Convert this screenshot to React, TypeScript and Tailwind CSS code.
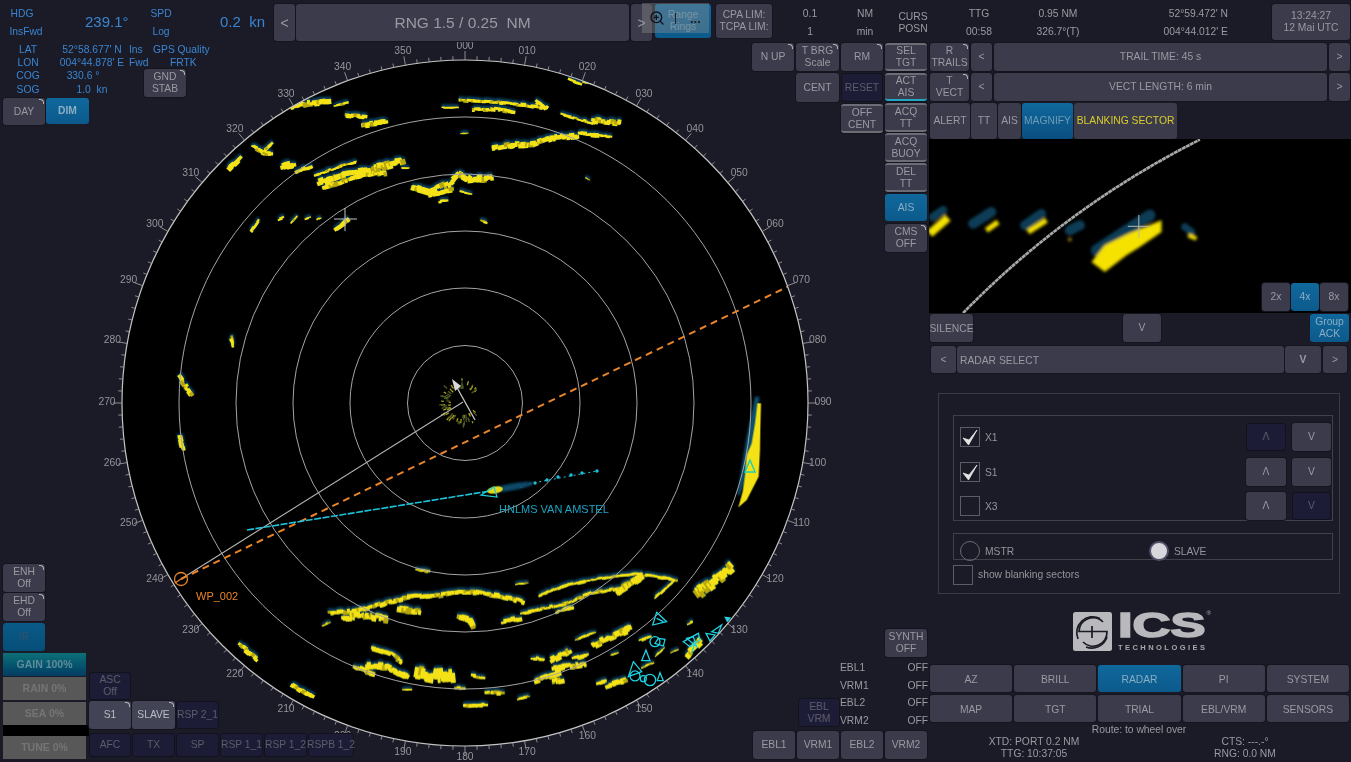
import React from "react";
import { ZoomIn } from "lucide-react";

const CX = 465;
const CY = 403;
const R = 343;

type Echo = [string, number];

// top echoes, coordinates taken from a 3x crop at (230,85)
const topEchoes: Echo[] = [
  ["180,68 230,55 300,48", 12], ["320,62 350,55", 6], ["350,90 405,95", 9], ["400,118 470,113", 12],
  ["640,68 685,68", 4], ["690,47 790,52 880,60 950,70", 7], ["920,48 950,70", 10], ["730,75 790,72 850,80", 8],
  ["1000,90 1090,115", 6], ["1090,105 1170,115", 12], ["790,190 850,180 910,178 930,170 960,160 1040,152", 12],
  ["1050,145 1140,155", 8], ["70,185 100,200 125,178", 8], ["100,205 125,205", 10], ["0,250 30,218", 12],
  ["155,245 195,235", 14], ["200,262 240,245", 8], ["270,295 340,270 420,255 520,225", 16],
  ["260,270 340,240 380,230", 6], ["285,305 400,270 470,265", 10], ["520,250 535,250", 4],
  ["550,305 600,320 660,295 690,268 720,285 790,278", 14], ["600,330 670,315", 10], ["695,320 720,325", 5],
  ["630,350 650,348", 6], ["65,438 85,408", 6], ["150,402 160,398", 5], ["185,410 200,393", 5],
  ["230,400 240,397", 5], ["265,403 275,397", 5], ["320,430 355,405", 12], ["755,408 770,412", 5],
  ["1070,280 1080,285", 4], ["700,145 712,145", 3],
];

// bottom echoes, 3x crop at (310,560)
const bottomEchoes: Echo[] = [
  ["60,160 110,155 170,145 230,128 260,120 300,110 380,108 440,98 500,98 570,108 640,125", 10],
  ["100,175 170,165 230,178", 14], ["640,160 700,145 770,130 840,100 930,85 990,45", 7],
  ["690,105 770,75 870,55 990,40", 6], ["740,155 790,140", 8], ["580,185 630,175", 10],
  ["1040,110 1090,65", 6], ["1005,45 1100,60", 8], ["1160,100 1230,50 1270,15", 22],
  ["920,95 960,70 990,50", 16], ["270,145 335,155", 14], ["445,170 480,180 490,205", 14],
  ["40,195 60,188", 5], ["325,30 355,35", 6], ["625,72 650,68", 4], ["190,265 240,280 275,305", 10],
  ["135,320 170,335 190,340", 12], ["170,318 230,320 290,350", 14], ["320,340 380,350 430,345", 26],
  ["490,348 520,352", 7], ["440,385 460,385", 8], ["285,388 300,388", 5], ["530,398 580,398", 9],
  ["630,415 655,410", 5], ["465,435 530,435", 10], ["670,295 705,297", 8], ["725,300 780,270", 14],
  ["730,325 830,310", 14], ["680,360 750,340", 12], ["730,365 755,360", 12], ["795,295 830,285", 8],
  ["800,240 850,218", 5], ["850,255 960,205", 14], ["995,240 1020,230", 6], ["865,370 885,365", 8],
  ["895,378 950,360", 12], ["1000,320 1030,308", 4], ["1130,285 1170,240", 16], ["1090,275 1105,268", 4],
  ["1040,285 1060,265", 4], ["905,285 925,278", 4], ["1140,190 1150,185", 6],
];

// the rest is in page coordinates x3 so it can share the same scale
const looseEchoes: Echo[] = [
  ["693,1014 699,1038", 9], ["540,1134 576,1185", 10], ["540,1311 549,1350", 11], ["720,1935 774,1980", 10],
  ["879,2055 936,2091", 10], ["1710,240 1740,252", 6], ["1755,243 1791,255", 9], ["774,450 798,462", 7],
];

const rnd = (n: number) => {
  const v = Math.sin(n * 12.9898) * 43758.5453;
  return v - Math.floor(v);
};

// chop an echo line into short returns so it reads as radar video, not as a drawn stroke
const streaks = (list: Echo[]) => {
  const out: { x1: number; y1: number; x2: number; y2: number; w: number; h: number }[] = [];
  let n = 1;
  list.forEach(([p, w]) => {
    const pts = p.split(" ").map((s) => s.split(",").map(Number));
    for (let i = 0; i < pts.length - 1; i++) {
      const [ax, ay] = pts[i];
      const [bx, by] = pts[i + 1];
      const dist = Math.hypot(bx - ax, by - ay);
      const ux = (bx - ax) / dist;
      const uy = (by - ay) / dist;
      for (let s = 0; s < dist; s += 6) {
        n += 1;
        const off = (rnd(n) - 0.5) * w * 0.8;
        const len = 8 + rnd(n + 0.5) * 12;
        const x = ax + ux * s - uy * off;
        const y = ay + uy * s + ux * off;
        out.push({
          x1: x - (ux * len) / 2,
          y1: y - (uy * len) / 2,
          x2: x + (ux * len) / 2,
          y2: y + (uy * len) / 2,
          w: Math.max(3, w * (0.75 + rnd(n + 0.25) * 0.55)),
          h: rnd(n + 0.75),
        });
      }
    }
  });
  return out;
};

const allStreaks = [
  { tx: 230, ty: 85, items: streaks(topEchoes) },
  { tx: 310, ty: 560, items: streaks(bottomEchoes) },
  { tx: 0, ty: 0, items: streaks(looseEchoes) },
];

const ticks = Array.from({ length: 180 }, (_, i) => i * 2);
const labels = Array.from({ length: 36 }, (_, i) => i * 10);

// sea clutter round own ship, with a gap on the right
const clutter = Array.from({ length: 70 }, (_, i) => {
  const a = ((40 + rnd(i + 3) * 280) * Math.PI) / 180;
  const r = 12 + rnd(i + 40) * 10;
  return { a, r, len: 2 + rnd(i + 90) * 3, hot: rnd(i + 70) > 0.55 };
});

const polar = (deg: number, rx: number, ry: number, cy: number) => {
  const a = ((deg - 90) * Math.PI) / 180;
  return [CX + rx * Math.cos(a), cy + ry * Math.sin(a)];
};

const Radar = () => (
  <svg className="absolute inset-0" width={1351} height={762} viewBox="0 0 1351 762">
    <defs>
      <clipPath id="disc">
        <circle cx={CX} cy={CY} r={R} />
      </clipPath>
      <filter id="soft">
        <feGaussianBlur stdDeviation="0.5" />
      </filter>
      <filter id="softer">
        <feGaussianBlur stdDeviation="1" />
      </filter>
    </defs>
    <circle cx={CX} cy={CY} r={R} fill="#000" />
    <g clipPath="url(#disc)">
      <g filter="url(#softer)" opacity="0.95">
        {allStreaks.map((g) => (
          <g key={g.tx} transform={`translate(${g.tx} ${g.ty - 1.5}) scale(0.3333)`} stroke="#0c4464" fill="none">
            {g.items.map((s, i) => (
              <line key={i} x1={s.x1} y1={s.y1} x2={s.x2} y2={s.y2} strokeWidth={s.w + 6} />
            ))}
          </g>
        ))}
        <g transform="translate(700 380) scale(0.3333)">
          <polygon points="165,50 178,50 170,150 155,220 135,300 120,345 112,345 125,260 138,180" fill="#0d5578" />
        </g>
      </g>
      <g filter="url(#soft)">
        {allStreaks.map((g) => (
          <g key={g.tx} transform={`translate(${g.tx} ${g.ty}) scale(0.3333)`} fill="none">
            {g.items.map((s, i) => (
              <line key={i} x1={s.x1} y1={s.y1} x2={s.x2} y2={s.y2} strokeWidth={s.w} stroke={s.h > 0.85 ? "#b8a80e" : "#f4e214"} />
            ))}
          </g>
        ))}
        <g transform="translate(700 380) scale(0.3333)">
          <polygon points="172,70 183,70 181,150 180,210 176,290 140,360 115,382 128,335 135,285 140,225 155,190 165,130" fill="#f4e214" />
        </g>
        {clutter.map((c, i) => (
          <line
            key={i}
            x1={463 + c.r * Math.cos(c.a)}
            y1={402 + c.r * Math.sin(c.a)}
            x2={463 + (c.r + c.len) * Math.cos(c.a)}
            y2={402 + (c.r + c.len) * Math.sin(c.a)}
            stroke={c.hot ? "#a89e1c" : "#4e5a24"}
            strokeWidth="1.3"
          />
        ))}
      </g>
      {[57.5, 115, 172, 229, 286].map((r) => (
        <circle key={r} cx={CX} cy={CY} r={r} fill="none" stroke="#a4a4a4" strokeWidth="1" />
      ))}
      <line x1={463} y1={402} x2={181} y2={579} stroke="#b8b8b8" strokeWidth="1.1" />
      <line x1={181} y1={579} x2={812} y2={275} stroke="#e8852a" strokeWidth="2" strokeDasharray="7 5" />
      {/* own ship */}
      <line x1={475} y1={420} x2={455} y2={384} stroke="#c8c8c8" strokeWidth="1.3" />
      <polygon points="452,379 461,386 455,391" fill="#d8d8d8" />
      {/* AIS target with track */}
      <polyline points="247,530 490,491" fill="none" stroke="#1cc4dc" strokeWidth="1.6" strokeDasharray="7 1.5" />
      <polyline points="490,491 597,471" fill="none" stroke="#1cc4dc" strokeWidth="1" strokeDasharray="2 3" />
      {[[508, 488], [521, 486], [535, 483], [547, 480], [558, 477], [571, 475], [582, 473], [597, 471]].map(([x, y]) => (
        <circle key={x} cx={x} cy={y} r="1.7" fill="#1cc4dc" />
      ))}
      <ellipse cx={512} cy={487} rx={22} ry={3.5} fill="#0c4a68" filter="url(#softer)" transform="rotate(-10 512 487)" />
      <ellipse cx={495} cy={490} rx={8} ry={3.5} fill="#e6d814" filter="url(#soft)" transform="rotate(-10 495 490)" />
      <polygon points="481,495 494,487 497,497" fill="none" stroke="#1cd0d8" strokeWidth="1.2" />
      {/* target symbols, 3x crop at (600,580) */}
      <g transform="translate(600 580) scale(0.3333)" fill="none" stroke="#1cd4e6" strokeWidth="3.8">
        <polygon points="170,97 200,125 158,135" />
        <line x1="170" y1="115" x2="190" y2="125" />
        <circle cx="165" cy="185" r="15" />
        <polygon points="175,175 195,178 190,198 165,190" />
        <polygon points="138,210 150,242 125,242" />
        <polygon points="100,245 125,275 85,290" />
        <circle cx="105" cy="288" r="15" />
        <circle cx="150" cy="300" r="17" />
        <circle cx="130" cy="296" r="9" />
        <polygon points="180,278 190,302 172,302" />
        <polygon points="250,185 295,160 300,180 270,200" />
        <polygon points="260,175 290,200 280,170" />
        <line x1="285" y1="190" x2="275" y2="218" />
        <polygon points="318,160 345,165 330,183" />
        <polygon points="335,155 365,135 355,160" />
        <polygon points="376,112 390,114 382,124" fill="#1cd4e6" />
      </g>
      <polygon points="750,460 755,472 745,472" fill="none" stroke="#1cd0b8" strokeWidth="1.4" />
      {/* marked target */}
      <line x1={334} y1={219} x2={357} y2={219} stroke="#c4c4c4" strokeWidth="1" />
      <line x1={345} y1={208} x2={345} y2={231} stroke="#c4c4c4" strokeWidth="1" />
    </g>
    <circle cx={CX} cy={CY} r={R} fill="none" stroke="#c4c4c4" strokeWidth="1.2" />
    {ticks.map((d) => {
      const len = d % 10 === 0 ? 9 : 4;
      const [x1, y1] = polar(d, R, R, CY);
      const [x2, y2] = polar(d, R + len, R + len, CY);
      return <line key={d} x1={x1} y1={y1} x2={x2} y2={y2} stroke="#a8a8a8" strokeWidth="0.8" />;
    })}
    {labels.map((d) => {
      const [x, y] = polar(d, 358, 355.5, 401);
      return (
        <text key={d} x={x} y={y + 3.5} textAnchor="middle" fontSize="10.3" fill="#94949a">
          {String(d).padStart(3, "0")}
        </text>
      );
    })}
    <circle cx={181} cy={579} r={6.5} fill="none" stroke="#e8852a" strokeWidth="1.3" />
    <line x1={175} y1={583} x2={181} y2={579} stroke="#e8852a" strokeWidth="1.3" />
    <text x={196} y={600} fontSize="11" fill="#e8852a">WP_002</text>
    <text x={499} y={513} fontSize="11" fill="#1aa4c4">HNLMS VAN AMSTEL</text>
  </svg>
);

type BtnProps = { children: React.ReactNode; className?: string; corner?: boolean; left?: boolean; size?: string };

const Btn = ({ children, className = "", corner, left, size = "text-[10.3px]" }: BtnProps) => (
  <div className={`relative flex items-center rounded-[3px] text-center leading-[12px] ${left ? "justify-start" : "justify-center"} ${size} ${className}`}>
    {children}
    {corner && <span className="absolute right-[1px] top-[1px] h-[5px] w-[5px] rounded-tr-[4px] border-r border-t border-[#b4b4b8]" />}
  </div>
);

const grey = "bg-[#3b3b4c] text-[#9a9aa2] shadow-[0_0_0_1px_#15151f]";
const greyHi = "bg-[#434356] text-[#bcbcc2] shadow-[0_0_0_1px_#15151f]";
const dark = "bg-[#1c1c36] text-[#5c5c6a] border border-[#12121c]";
const blue = "bg-gradient-to-b from-[#10689c] to-[#0c5a8c] text-[#8aaec4]";

const Check = ({ on }: { on?: boolean }) => (
  <div className="relative h-[20px] w-[20px] border border-[#5c5c64]">
    {on && (
      <svg className="absolute -left-px -top-px" width="20" height="20" viewBox="0 0 20 20">
        <path d="M3 11 L8.5 18 L17 3 L9 13 Z" fill="#e4e4e4" stroke="#e4e4e4" strokeWidth="0.8" strokeLinejoin="round" />
      </svg>
    )}
  </div>
);

const SelectRow = ({ name, on, upDark, downDark }: { name: string; on?: boolean; upDark?: boolean; downDark?: boolean }) => (
  <div className="flex h-[28px] items-center">
    <div className="ml-[6px] flex w-[286px] items-center gap-[5px] text-[10.3px] text-[#94949a]">
      <Check on={on} />
      <span className="pt-[2px]">{name}</span>
    </div>
    <Btn className={`h-[28px] w-[40px] ${upDark ? dark : grey}`}>Λ</Btn>
    <Btn className={`ml-[6px] h-[28px] w-[39px] ${downDark ? dark : grey}`}>V</Btn>
  </div>
);

const Logo = () => (
  <div className="ml-[143px] flex items-start gap-[6px]">
    <svg width="39" height="39" viewBox="0 0 39 39">
      <rect width="39" height="39" rx="2.5" fill="#b9b9bd" />
      <g fill="none" stroke="#1a1b26" strokeWidth="1.7">
        <path d="M30 10 A14 14 0 0 0 6 19.5 H34 A14 14 0 0 1 10 30" />
        <path d="M27 6.5 A16 16 0 0 0 5 27" />
        <path d="M34 25 A16 16 0 0 1 13 35" />
        <path d="M19 14 V26" />
      </g>
    </svg>
    <div className="relative flex w-[87px] flex-col">
      <span className="inline-block h-[26px] origin-left scale-x-150 text-[35px] leading-[26px] font-bold text-[#b9b9bd] [-webkit-text-stroke:1.6px_#b9b9bd]">ICS</span>
      <span className="absolute -right-[6px] -top-[3px] text-[6px] leading-[8px] text-[#b9b9bd]">®</span>
      <span className="mt-[6px] text-[7.5px] leading-[7px] font-bold tracking-[2.45px] whitespace-nowrap text-[#a8a8ac]">TECHNOLOGIES</span>
    </div>
  </div>
);

const Magnifier = () => (
  <div className="relative -ml-px h-[174px] w-[422px] bg-black">
    <svg width="422" height="174" viewBox="148 27 1265 520">
      <defs>
        <filter id="soft2">
          <feGaussianBlur stdDeviation="5" />
        </filter>
      </defs>
      <path d="M250 548 Q560 230 960 28" fill="none" stroke="#a8a8a8" strokeWidth="8" strokeDasharray="12 1.5" />
      <g filter="url(#soft2)">
        <g fill="none" stroke="#0c3c56" strokeLinecap="round">
          <line x1="160" y1="260" x2="190" y2="240" strokeWidth="26" />
          <line x1="280" y1="280" x2="335" y2="245" strokeWidth="30" />
          <line x1="435" y1="285" x2="485" y2="250" strokeWidth="28" />
          <line x1="570" y1="300" x2="600" y2="285" strokeWidth="30" />
          <line x1="650" y1="360" x2="810" y2="255" strokeWidth="34" />
          <line x1="915" y1="290" x2="935" y2="305" strokeWidth="22" />
        </g>
        <g fill="none" stroke="#f6e200">
          <line x1="150" y1="310" x2="205" y2="262" strokeWidth="24" />
          <line x1="320" y1="300" x2="355" y2="275" strokeWidth="16" />
          <line x1="445" y1="305" x2="500" y2="270" strokeWidth="16" />
          <line x1="565" y1="325" x2="575" y2="330" strokeWidth="10" stroke="#8a7a10" />
          <line x1="925" y1="315" x2="950" y2="325" strokeWidth="12" />
        </g>
        <polygon points="635,395 675,345 745,310 845,270 845,305 780,350 740,375 675,425" fill="#f6e200" />
      </g>
      <line x1="744" y1="288" x2="810" y2="288" stroke="#b8b8b0" strokeWidth="3" />
      <line x1="777" y1="254" x2="777" y2="322" stroke="#b8b8b0" strokeWidth="3" />
    </svg>
    <div className="absolute right-[3px] top-[144px] flex gap-px">
      <Btn className={`h-[28px] w-[28px] ${grey}`}>2x</Btn>
      <Btn className={`h-[28px] w-[28px] ${blue}`}>4x</Btn>
      <Btn className={`h-[28px] w-[28px] ${grey}`}>8x</Btn>
    </div>
  </div>
);

const TopBar = () => (
  <div className="flex h-[43px] pt-[4px]">
    <div className="flex h-[36px] w-[274px] items-center text-[#3a85d2]">
      <div className="flex w-[52px] flex-col items-center pt-[2px] text-[10.3px] leading-[18px]">
        <span className="mr-2">HDG</span>
        <span>InsFwd</span>
      </div>
      <span className="ml-[33px] w-[60px] text-[15px]">239.1°</span>
      <div className="flex w-[32px] flex-col items-center pt-[2px] text-[10.3px] leading-[18px]">
        <span>SPD</span>
        <span>Log</span>
      </div>
      <span className="ml-[43px] text-[15px] whitespace-pre">0.2  kn</span>
    </div>
    <Btn size="text-[14px]" className={`h-[37px] w-[21px] ${grey}`}>&lt;</Btn>
    <Btn size="text-[15.5px]" className={`ml-px h-[37px] w-[333px] whitespace-pre ${grey}`}>RNG 1.5 / 0.25  NM</Btn>
    <Btn size="text-[14px]" className={`ml-[2px] h-[37px] w-[21px] ${grey}`}>&gt;</Btn>
    <div className="relative ml-[3px] w-[56px]">
      <Btn className="h-[34px] w-[56px] bg-gradient-to-b from-[#10689c] to-[#0c5a8c] text-[#6a98b2]">Range<br />Rings</Btn>
      <div className="absolute -left-[13px] -top-[1px] flex h-[30px] w-[67px] items-center bg-[#8c8c8c]/40 pl-[7px]">
        <ZoomIn size={16} strokeWidth={2} className="text-[#101018]" />
        <span className="ml-[10px] h-[11px] w-px bg-[#222]" />
        <span className="ml-[14px] text-[13px] leading-[13px] font-bold text-[#222]">...</span>
      </div>
    </div>
    <Btn className={`ml-[5px] h-[34px] w-[56px] ${grey}`}>CPA LIM:<br />TCPA LIM:</Btn>
    <div className="flex h-[36px] items-center pt-[2px] text-[10.3px] leading-[18px] text-[#9a9aa2]">
      <div className="w-[76px] text-center">0.1<br />1</div>
      <div className="w-[34px] text-center">NM<br />min</div>
      <div className="w-[62px] text-center leading-[12px]">CURS<br />POSN</div>
      <div className="w-[70px] text-center">TTG<br />00:58</div>
      <div className="w-[88px] text-center">0.95 NM<br />326.7°(T)</div>
      <div className="w-[126px] text-right">52°59.472' N<br />004°44.012' E</div>
    </div>
    <Btn className={`ml-[44px] h-[36px] w-[78px] ${grey}`}>13:24:27<br />12 Mai UTC</Btn>
  </div>
);

const InfoBlock = () => (
  <div className="text-[10.3px] leading-[12px] text-[#3a85d2]">
    <div className="grid grid-cols-[56px_72px_25px_auto] grid-rows-[12.5px_12.5px_13px_15px] items-center pt-px">
      <span className="text-center">LAT</span>
      <span className="text-center">52°58.677' N</span>
      <span className="pl-[1px]">Ins</span>
      <span className="w-[60px] whitespace-nowrap">GPS Quality</span>
      <span className="text-center">LON</span>
      <span className="text-center">004°44.878' E</span>
      <span className="pl-[1px]">Fwd</span>
      <span className="w-[60px] pl-[17px]">FRTK</span>
      <span className="text-center">COG</span>
      <span className="pr-[18px] text-center">330.6 °</span>
      <span className="col-start-3 row-span-2 row-start-3 w-[42px] self-start pl-[16px]">
        <Btn corner className={`h-[28px] w-[42px] ${grey}`}>GND<br />STAB</Btn>
      </span>
      <span className="col-start-1 row-start-4 text-center">SOG</span>
      <span className="col-start-2 row-start-4 text-center whitespace-pre">1.0  kn</span>
    </div>
    <div className="mt-px flex pl-[3px]">
      <Btn corner className={`h-[27px] w-[42px] ${grey}`}>DAY</Btn>
      <Btn className={`ml-px h-[26px] w-[43px] font-bold ${blue}`}>DIM</Btn>
    </div>
  </div>
);

const Bar = ({ children, active, className = "" }: { children: React.ReactNode; active?: boolean; className?: string }) => (
  <div
    className={`flex h-[23px] w-[83px] items-center justify-center text-[10.5px] font-bold ${
      active ? "bg-gradient-to-b from-[#0e7078] to-[#043c62] text-[#5f8c9c]" : "bg-[#585858] text-[#757575]"
    } ${className}`}
  >
    {children}
  </div>
);

const BottomLeft = () => (
  <div className="flex items-end pb-[3px] pl-[3px]">
    <div className="flex w-[86px] flex-col">
      <div className="flex flex-col gap-px">
        <Btn corner className={`h-[28px] w-[42px] ${grey}`}>ENH<br />Off</Btn>
        <Btn corner className={`h-[28px] w-[42px] ${grey}`}>EHD<br />Off</Btn>
        <Btn className="mt-px h-[28px] w-[42px] bg-gradient-to-b from-[#0a5a88] to-[#064e78] text-[#34506a]">IR</Btn>
      </div>
      <Bar active className="mt-[2px]">GAIN 100%</Bar>
      <Bar className="mt-px">RAIN 0%</Bar>
      <Bar className="mt-[2px]">SEA 0%</Bar>
      <div className="h-[11px] w-[86px] bg-black" />
      <Bar>TUNE 0%</Bar>
    </div>
    <div className="mb-[2px] flex flex-col">
      <Btn className={`h-[28px] w-[42px] ${dark}`}>ASC<br />Off</Btn>
      <div className="mt-px flex gap-px">
        <Btn corner className={`h-[28px] w-[42px] ${greyHi}`}>S1</Btn>
        <Btn corner className={`h-[28px] w-[43px] ${greyHi}`}>SLAVE</Btn>
        <Btn className={`h-[28px] w-[43px] whitespace-nowrap ${dark}`}>RSP 2_1</Btn>
      </div>
      <div className="mt-[4px] flex gap-px">
        <Btn className={`h-[24px] w-[42px] ${dark}`}>AFC</Btn>
        <Btn className={`h-[24px] w-[43px] ${dark}`}>TX</Btn>
        <Btn className={`h-[24px] w-[43px] ${dark}`}>SP</Btn>
        <Btn className={`h-[24px] w-[43px] whitespace-nowrap ${dark}`}>RSP 1_1</Btn>
        <Btn className={`h-[24px] w-[43px] whitespace-nowrap ${dark}`}>RSP 1_2</Btn>
        <Btn className={`h-[24px] w-[46px] whitespace-nowrap ${dark}`}>RSPB 1_2</Btn>
      </div>
    </div>
  </div>
);

const MiddleTop = () => (
  <div className="flex gap-[2px]">
    <div className="grid h-fit w-[131px] grid-cols-[42px_43px_42px] grid-rows-[28px_29px_29px] gap-x-[2px] gap-y-[2px]">
      <Btn corner className={grey}>N UP</Btn>
      <Btn corner className={grey}>T BRG<br />Scale</Btn>
      <Btn corner className={grey}>RM</Btn>
      <Btn className={`col-start-2 ${grey}`}>CENT</Btn>
      <Btn className={dark}>RESET</Btn>
      <Btn className={`col-start-3 border-y-2 border-[#6c6c76] ${grey}`}>OFF<br />CENT</Btn>
    </div>
    <div className="flex w-[42px] flex-col gap-[2px]">
      <Btn className={`h-[28px] border-y-2 border-[#6c6c76] ${grey}`}>SEL<br />TGT</Btn>
      <Btn className={`h-[28px] border-y-2 border-t-[#6c6c76] border-b-[#22a8c4] ${grey}`}>ACT<br />AIS</Btn>
      <Btn className={`h-[29px] border-y-2 border-[#6c6c76] ${grey}`}>ACQ<br />TT</Btn>
      <Btn className={`-mt-px h-[29px] border-y-2 border-[#6c6c76] ${grey}`}>ACQ<br />BUOY</Btn>
      <Btn className={`-mt-px h-[29px] border-y-2 border-[#6c6c76] ${grey}`}>DEL<br />TT</Btn>
      <Btn className={`h-[27px] ${blue}`}>AIS</Btn>
      <Btn corner className={`mt-px h-[28px] ${grey}`}>CMS<br />OFF</Btn>
    </div>
  </div>
);

const MiddleBottom = () => (
  <div className="flex flex-col items-end pb-[3px] text-[#9a9aa2]">
    <Btn className={`mr-[3px] h-[28px] w-[42px] ${grey}`}>SYNTH<br />OFF</Btn>
    <div className="flex items-end">
      <Btn className={`mb-[2px] h-[29px] w-[42px] ${dark}`}>EBL<br />VRM</Btn>
      <div className="w-[90px] pt-[2px] pr-[2px] text-[10.3px] leading-[17.5px]">
        {["EBL1", "VRM1", "EBL2", "VRM2"].map((n) => (
          <div key={n} className="flex justify-between">
            <span>{n}</span>
            <span>OFF</span>
          </div>
        ))}
      </div>
    </div>
    <div className="mr-[3px] mt-[2px] flex gap-[2px]">
      {["EBL1", "VRM1", "EBL2", "VRM2"].map((n) => (
        <Btn key={n} className={`h-[28px] w-[42px] ${grey}`}>{n}</Btn>
      ))}
    </div>
  </div>
);

const RightPanel = () => (
  <div className="flex w-[421px] flex-col">
    <div className="flex h-[28px] gap-px">
      <Btn corner className={`w-[39px] ${grey}`}>R<br />TRAILS</Btn>
      <Btn className={`ml-px w-[21px] ${grey}`}>&lt;</Btn>
      <Btn className={`ml-px w-[333px] ${grey}`}>TRAIL TIME: 45 s</Btn>
      <Btn className={`ml-px w-[21px] ${grey}`}>&gt;</Btn>
    </div>
    <div className="mt-[2px] flex h-[28px] gap-px">
      <Btn corner className={`w-[39px] ${grey}`}>T<br />VECT</Btn>
      <Btn className={`ml-px w-[21px] ${grey}`}>&lt;</Btn>
      <Btn className={`ml-px w-[333px] ${grey}`}>VECT LENGTH: 6 min</Btn>
      <Btn className={`ml-px w-[21px] ${grey}`}>&gt;</Btn>
    </div>
    <div className="mt-[2px] flex h-[36px] gap-px">
      <Btn className={`w-[40px] ${grey}`}>ALERT</Btn>
      <Btn className={`w-[26px] ${grey}`}>TT</Btn>
      <Btn className={`w-[23px] ${grey}`}>AIS</Btn>
      <Btn className="w-[51px] bg-gradient-to-b from-[#10689c] to-[#0a4e80] text-[#6f9cb8]">MAGNIFY</Btn>
      <Btn className="w-[103px] whitespace-nowrap bg-[#3b3b4c] text-[#d8cc2a]">BLANKING SECTOR</Btn>
    </div>
    <Magnifier />
    <div className="mt-px flex h-[28px]">
      <Btn className={`w-[43px] pt-[2px] ${grey}`}>SILENCE</Btn>
      <Btn className={`ml-[150px] w-[38px] ${grey}`}>V</Btn>
      <Btn className={`ml-[149px] w-[39px] ${blue}`}>Group<br />ACK</Btn>
    </div>
    <div className="ml-px mt-[4px] flex h-[27px]">
      <Btn className={`w-[25px] ${grey}`}>&lt;</Btn>
      <Btn left className={`ml-px w-[327px] pl-[3px] pt-[2px] ${grey}`}>RADAR SELECT</Btn>
      <Btn className={`ml-px w-[36px] font-bold ${grey}`}>V</Btn>
      <Btn className={`ml-[2px] w-[24px] ${grey}`}>&gt;</Btn>
    </div>
    <div className="ml-[8px] mt-[20px] h-[201px] w-[402px] border border-[#3a3b46] pl-[14px] pt-[21px]">
      <div className="flex h-[106px] w-[380px] flex-col gap-[6.5px] border border-[#3f404a] pt-[7px]">
        <SelectRow name="X1" on upDark />
        <SelectRow name="S1" on />
        <SelectRow name="X3" downDark />
      </div>
      <div className="mt-[12px] flex h-[27px] w-[380px] items-start border border-[#3f404a] pl-[6px] pt-[7px] text-[10.3px] text-[#94949a]">
        <span className="h-[20px] w-[20px] rounded-full border border-[#6a6a70]" />
        <span className="ml-[5px] w-[164px] pt-[3px]">MSTR</span>
        <span className="h-[20px] w-[20px] rounded-full border-2 border-[#50506c] bg-[#d8d8dc]" />
        <span className="ml-[5px] pt-[3px]">SLAVE</span>
      </div>
      <div className="mt-[5px] flex items-center gap-[5px] text-[10.3px] text-[#94949a]">
        <Check />
        show blanking sectors
      </div>
    </div>
    <div className="mt-[18px]">
      <Logo />
    </div>
    <div className="mt-[14px] grid grid-cols-5 gap-x-[2px] gap-y-[3px] pr-[2px]">
      {["AZ", "BRILL", "RADAR", "PI", "SYSTEM", "MAP", "TGT", "TRIAL", "EBL/VRM", "SENSORS"].map((n) => (
        <Btn key={n} className={`h-[27px] pt-[2px] ${n === "RADAR" ? blue : grey}`}>{n}</Btn>
      ))}
    </div>
    <div className="relative mt-[2px] text-center text-[10.3px] leading-[12px] text-[#9a9aa2]">
      <div className="pr-[3px]">Route: to wheel over</div>
      <div className="flex">
        <div className="w-[208px]">XTD: PORT 0.2 NM<br />TTG: 10:37:05</div>
        <div className="ml-[1px] w-[212px]">CTS: ---.-°<br />RNG: 0.0 NM</div>
      </div>
    </div>
  </div>
);

export default function App() {
  return (
    <div className="relative h-[762px] w-[1351px] overflow-hidden bg-[#1a1b26] font-['Liberation_Sans',Arial,sans-serif]">
      <Radar />
      <div className="relative blur-[0.4px]">
        <TopBar />
        <div className="flex h-[719px]">
          <div className="flex w-[752px] flex-col justify-between">
            <InfoBlock />
            <BottomLeft />
          </div>
          <div className="flex w-[178px] flex-col justify-between">
            <MiddleTop />
            <MiddleBottom />
          </div>
          <RightPanel />
        </div>
      </div>
    </div>
  );
}
